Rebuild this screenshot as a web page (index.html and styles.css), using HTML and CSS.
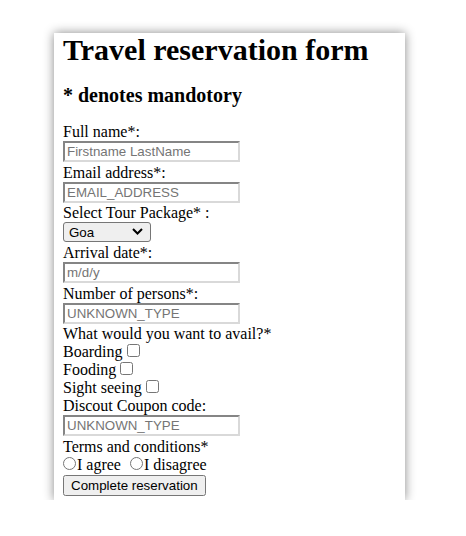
FILE: index.html
```html
<!DOCTYPE html>
<html>
<head>
<meta charset="utf-8">
<link rel="stylesheet" href="styles.css">
</head>
<body class="page">
<div class="card">
<h1 class="title">Travel reservation form</h1>
<h3 class="subtitle">* denotes mandotory</h3>
<form class="form">
<label>Full name*:</label><br>
<input class="field" type="text" placeholder="Firstname LastName"><br>
<label>Email address*:</label><br>
<input class="field" type="text" placeholder="EMAIL_ADDRESS"><br>
<label>Select Tour Package* :</label><br>
<span class="picker-wrap"><select class="picker"><option>Goa</option><option>Kerala</option></select><svg class="chevron" width="11" height="7" viewBox="0 0 11 7"><path d="M1 1 L5.5 5.5 L10 1" fill="none" stroke="#000" stroke-width="2"/></svg></span><br>
<label>Arrival date*:</label><br>
<input class="field" type="text" placeholder="m/d/y"><br>
<label>Number of persons*:</label><br>
<input class="field" type="text" placeholder="UNKNOWN_TYPE"><br>
<label>What would you want to avail?*</label><br>
<label>Boarding</label><input class="check" type="checkbox"><br>
<label>Fooding</label><input class="check" type="checkbox"><br>
<label>Sight seeing</label><input class="check" type="checkbox"><br>
<label>Discout Coupon code:</label><br>
<input class="field" type="text" placeholder="UNKNOWN_TYPE"><br>
<label>Terms and conditions*</label><br>
<input class="radio radio-first" type="radio" name="t"><label>I agree</label>
<input class="radio" type="radio" name="t"><label>I disagree</label><br>
<button class="submit" type="button">Complete reservation</button>
</form>
</div>
</body>
</html>
```
FILE: styles.css
```css
.page {
  margin: 8px;
  background: #fff;
  font-family: "Liberation Serif", "Times New Roman", serif;
  font-size: 16px;
  color: #000;
}
.card {
  width: 342px;
  margin: 25px 0 0 46px;
  padding: 0 0 4px 9px;
  background: #fff;
  box-shadow: 0 0 10px #888;
}
.title {
  margin: 0;
  font-size: 30px;
  font-weight: bold;
}
.subtitle {
  margin: 17.4px 0 15.4px;
  font-size: 20px;
  font-weight: bold;
}
.form {
  margin: 0;
}
.field {
  font-family: "Liberation Sans", Arial, sans-serif;
  font-size: 13.333px;
  width: 177px;
  height: 21px;
  box-sizing: border-box;
  border: 2px solid #d9d9d9;
  border-top-color: #858585;
  border-left-color: #858585;
  padding: 1px 2px;
  margin: 0 0 1.8px;
  vertical-align: top;
}
.field::placeholder {
  color: #757575;
}
.picker-wrap {
  position: relative;
  display: inline-block;
  vertical-align: top;
  margin: 0 0 1.4px;
}
.picker {
  appearance: none;
  -webkit-appearance: none;
  display: block;
  font-family: "Liberation Sans", Arial, sans-serif;
  font-size: 13.333px;
  color: #000;
  width: 88px;
  height: 20px;
  box-sizing: border-box;
  margin: 0;
  padding: 0 0 0 5px;
  border: 1px solid #767676;
  border-radius: 3px;
  background: #efefef;
}
.chevron {
  position: absolute;
  left: 69px;
  top: 6px;
  pointer-events: none;
}
.check {
  margin: 0 3px 0 4px;
}
.radio {
  margin: 0 1px 0 5px;
}
.radio-first {
  margin-left: 0;
}
.submit {
  font-family: "Liberation Sans", Arial, sans-serif;
  font-size: 13.333px;
  height: 21px;
  margin: 1px 0 0;
  vertical-align: top;
}
```
